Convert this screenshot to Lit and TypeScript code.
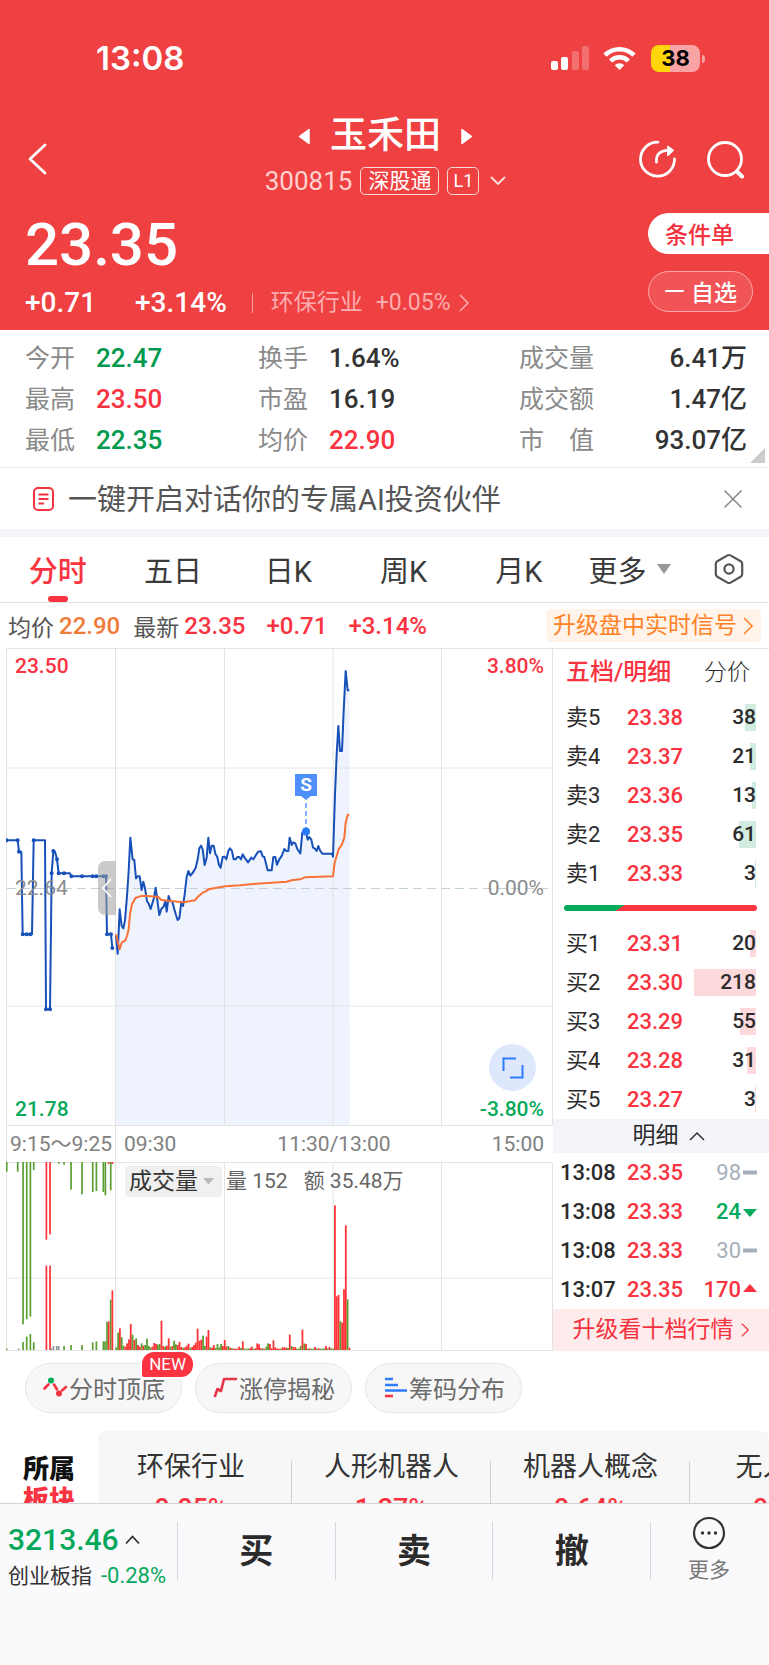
import { LitElement, html, css, svg } from "lit";
import { customElement } from "lit/decorators.js";

type Point = [number, number];

// Price series in plot units: three units per pixel, y measured from 640px.
const AUCTION: Point[] = [
  [20, 598], [53, 598], [57, 632], [64, 632], [68, 880], [80, 880], [91, 880], [96, 880], [101, 598],
  [135, 598], [138, 1105], [150, 1105], [155, 697], [160, 630], [165, 632], [171, 655], [176, 697],
  [192, 697], [210, 697], [214, 706], [246, 706], [278, 706], [289, 706], [310, 706], [318, 706],
  [321, 880], [333, 880], [337, 921],
];
const AUCTION_DOTS: Point[] = AUCTION.filter(([x]) => ![64, 96, 135, 165, 210].includes(x));

const PRICE: Point[] = [
  [348, 885], [353, 938], [359, 805], [365, 855], [370, 862], [375, 838], [381, 765], [386, 690],
  [391, 590], [398, 655], [403, 657], [408, 712], [413, 706], [419, 706], [425, 747], [430, 722],
  [435, 742], [441, 780], [446, 788], [452, 804], [462, 770], [467, 740], [473, 785], [478, 822],
  [484, 804], [491, 796], [496, 780], [500, 812], [506, 765], [511, 780], [517, 782], [523, 805],
  [528, 822], [533, 837], [538, 832], [544, 782], [549, 795], [554, 760], [560, 708], [565, 690],
  [571, 704], [580, 693], [587, 680], [593, 655], [598, 622], [603, 614], [608, 625], [614, 672],
  [620, 650], [625, 590], [630, 637], [635, 614], [641, 614], [646, 638], [652, 648], [657, 672],
  [662, 680], [668, 648], [674, 647], [679, 655], [685, 630], [690, 622], [696, 630], [701, 655],
  [707, 655], [712, 648], [718, 648], [723, 655], [728, 640], [734, 650], [744, 664], [754, 650],
  [760, 655], [768, 642], [774, 632], [783, 631], [788, 646], [793, 648], [803, 688], [815, 688],
  [820, 648], [826, 648], [831, 671], [838, 655], [846, 643], [853, 624], [859, 630], [865, 630],
  [869, 590], [875, 612], [880, 604], [886, 607], [892, 624], [901, 637], [907, 575], [912, 572],
  [918, 572], [923, 596], [928, 588], [934, 596], [939, 620], [944, 622], [950, 630], [955, 615],
  [961, 630], [967, 638], [996, 638], [999, 647], [1005, 460], [1010, 340], [1015, 255], [1020, 330],
  [1026, 330], [1031, 210], [1037, 90], [1043, 148], [1048, 148],
];

const AVERAGE: Point[] = [
  [348, 880], [354, 905], [359, 925], [365, 905], [376, 898], [381, 885], [386, 865], [390, 820],
  [396, 790], [406, 771], [420, 766], [435, 764], [475, 768], [484, 777], [505, 779], [550, 784],
  [585, 778], [592, 769], [608, 755], [617, 751], [626, 745], [650, 740], [675, 736], [720, 733],
  [770, 728], [860, 722], [875, 718], [900, 715], [915, 709], [999, 706], [1004, 665], [1010, 645],
  [1016, 625], [1026, 610], [1033, 590], [1037, 545], [1043, 522], [1048, 520],
];

// Auction volume: colour, x, start and end of the bar (units from 960px).
const AUCTION_BARS: [string, number, number, number][] = [
  ["g", 20, 603, 632], ["g", 53, 603, 632], ["g", 69, 603, 1090], ["g", 80, 603, 1075],
  ["g", 91, 603, 1067], ["g", 101, 603, 627], ["r", 139, 603, 836], ["r", 150, 603, 820],
  ["g", 177, 603, 608], ["g", 192, 603, 611], ["g", 213, 603, 686], ["g", 246, 603, 700],
  ["g", 278, 603, 693], ["g", 289, 603, 690], ["g", 310, 603, 693], ["g", 316, 603, 703],
  ["r", 326, 603, 609], ["g", 332, 603, 688], ["r", 337, 603, 609],
  ["g", 20, 1163, 1167], ["n", 56, 1163, 1167], ["g", 69, 1143, 1167], ["g", 80, 1127, 1167],
  ["g", 91, 1119, 1167], ["g", 101, 1144, 1167], ["r", 139, 914, 1167], ["r", 150, 914, 1167],
  ["n", 154, 1162, 1167], ["n", 160, 1155, 1167], ["n", 170, 1155, 1167], ["n", 176, 1155, 1167],
  ["g", 192, 1155, 1167], ["g", 213, 1152, 1167], ["g", 246, 1152, 1167], ["g", 278, 1144, 1167],
  ["g", 289, 1141, 1167], ["g", 310, 1141, 1167], ["g", 315, 1141, 1167], ["g", 321, 1083, 1167],
  ["r", 326, 1081, 1167], ["g", 332, 1016, 1167], ["r", 337, 988, 1167],
];

// One bar per minute.
const MINUTE_BARS =
  "g8 g52 r65 g38 g13 r10 r20 r32 r78 g46 r30 g35 r15 r10 g20 r13 g15 g34 g12 g8 r10 r21 r18 g16 g18 r88 r12 g10 r13 r35 " +
  "g10 r12 g28 g17 r15 r24 r9 g7 r8 r13 r19 g7 r9 r15 r22 r64 r28 r31 g43 g12 r40 r60 g8 r7 r15 g6 g18 g8 g18 r12 " +
  "r30 r10 g12 r7 g5 r4 r4 r4 r10 g6 r26 g4 g4 g4 r5 r10 g4 r5 r20 r17 r5 g5 r4 g10 g20 r18 r5 r29 r8 r4 " +
  "r4 g4 r8 r8 r7 g6 r46 g12 r9 r9 g4 g4 g12 r61 g20 r18 g4 r5 g4 g4 r9 g4 r5 g4 g4 g4 r12 g5 r9 g5 " +
  "g4 r434 r161 r165 g87 r82 r182 r374 g152 r7";

const BAR_COLORS: Record<string, string> = { g: "#5a9e32", r: "#ff3236", n: "#8d9296" };

const points = (list: Point[]) => list.map(([x, y]) => `${x / 3},${640 + y / 3}`).join(" ");

const chevronRight = html`<svg class="chev" viewBox="0 0 12 20" width="12" height="20" aria-hidden="true">
  <path d="M2 2l8 8-8 8" fill="none" stroke="currentColor" stroke-width="1.6" />
</svg>`;

const STATS: [string, string, string][] = [
  ["今开", "22.47", "down"], ["换手", "1.64%", ""], ["成交量", "6.41万", ""],
  ["最高", "23.50", "up"], ["市盈", "16.19", ""], ["成交额", "1.47亿", ""],
  ["最低", "22.35", "down"], ["均价", "22.90", "up"], ["市　值", "93.07亿", ""],
];

@customElement("stock-header")
export class StockHeader extends LitElement {
  static styles = css`
    :host { display: block; background: #ef4042; color: #fff; }
    button { font: inherit; color: inherit; background: none; border: 0; padding: 0; display: flex; }
    svg { display: block; }
    .status { display: flex; justify-content: space-between; padding: 38px 65px 34px 96px; line-height: 40px; }
    .clock { font: 600 33px/40px Inter, sans-serif; }
    .signals { display: flex; align-items: center; }
    .battery { position: relative; width: 49px; height: 27px; margin-left: 15px; margin-right: 4px; border-radius: 8px;
      background: linear-gradient(90deg, #ffd60a 38%, #f9a3a4 38%); color: #000;
      font: 700 22px/27px Inter, sans-serif; text-align: center; }
    .battery::after { content: ""; position: absolute; right: -5px; top: 10px; width: 3px; height: 8px;
      border-radius: 0 4px 4px 0; background: #f7a0a0; }
    .nav { display: grid; grid-template-columns: 1fr auto 1fr; padding: 0 24px 0 26px; }
    .back { margin-top: 30px; align-self: start; }
    .tools { display: flex; justify-content: flex-end; gap: 28px; margin-top: 27px; }
    .tools button { align-self: flex-start; }
    .title { display: flex; align-items: center; justify-content: center; gap: 20px; padding-top: 1px; }
    h1 { margin: 0; font-size: 37px; line-height: 46px; font-weight: 500; }
    .sub { display: flex; align-items: center; justify-content: center; gap: 8px; margin-top: 8px; }
    .code { font-size: 26px; line-height: 28px; color: #ffd2d0; }
    .tag { border: 1px solid #ffd9d8; border-radius: 5px; font-size: 21px; line-height: 26px; padding: 0 7px; }
    .tag.lv { padding: 0 5px; font-size: 18px; }
    .drop { margin-left: 3px; }
    .quote { display: flex; justify-content: space-between; padding: 18px 0 9px 25px; }
    .price { font-size: 60px; line-height: 64px; font-weight: 500; }
    .change { display: flex; align-items: center; margin-top: 8px; font-size: 28px; line-height: 36px; font-weight: 500; }
    .pct { margin-left: 39px; }
    .sector { display: flex; align-items: center; gap: 13px; margin-left: 25px; padding-left: 18px;
      color: #fbadad; font-size: 23px; line-height: 20px; font-weight: 400; text-decoration: none;
      border-left: 1px solid #f79a9b; }
    .chev { margin-left: -6px; }
    .actions { display: flex; flex-direction: column; gap: 17px; width: 121px; }
    .actions button { height: 41px; align-items: center; font-size: 23px; font-weight: 500; box-sizing: border-box; padding-bottom: 2px; }
    .order { background: #fff; border-radius: 21px 0 0 21px; padding-left: 17px; color: #f5333f; }
    .actions .fav { width: 105px; border: 1px solid #f9a9a9; border-radius: 21px; background: #f15456; padding-left: 16px; gap: 7px; }
  `;
  render() {
    return html`
      <div class="status">
        <span class="clock">13:08</span>
        <div class="signals">
          <svg width="86" height="28" viewBox="0 0 86 28" fill="#fff" aria-label="信号">
            <rect x="1" y="17" width="7" height="9" rx="2" />
            <rect x="11" y="13" width="7" height="13" rx="2" />
            <rect x="22" y="7" width="7" height="19" rx="2" opacity=".25" />
            <rect x="32" y="2" width="7" height="24" rx="2" opacity=".25" />
            <g fill="none" stroke="#fff" stroke-width="4.6">
              <path d="M55 11.2a20.500 20.500 0 0 1 29 0" />
              <path d="M60.600 17a12.500 12.500 0 0 1 17.800 0" />
            </g>
            <path d="M69.500 26l-4.800-4.700a6.800 6.800 0 0 1 9.600 0z" />
          </svg>
          <span class="battery">38</span>
        </div>
      </div>
      <div class="nav">
        <button class="back" aria-label="返回">
          <svg width="22" height="34" viewBox="0 0 22 34"><path d="M19 3L4 17l15 14" fill="none" stroke="#fff" stroke-width="2.800" stroke-linecap="round" stroke-linejoin="round" /></svg>
        </button>
        <div>
          <div class="title">
            <button aria-label="上一只"><svg width="12" height="17" viewBox="0 0 12 17"><path d="M11 1.500v14L1.500 8.500z" fill="#fff" stroke="#fff" stroke-width="1.500" stroke-linejoin="round" /></svg></button>
            <h1>玉禾田</h1>
            <button aria-label="下一只"><svg width="12" height="17" viewBox="0 0 12 17"><path d="M1 1.500v14l9.500-7z" fill="#fff" stroke="#fff" stroke-width="1.500" stroke-linejoin="round" /></svg></button>
          </div>
          <div class="sub">
            <span class="code">300815</span><span class="tag">深股通</span><span class="tag lv">L1</span>
            <button class="drop" aria-label="展开"><svg width="16" height="10" viewBox="0 0 16 10"><path d="M1 1l7 7 7-7" fill="none" stroke="#ffe3e2" stroke-width="1.800" /></svg></button>
          </div>
        </div>
        <div class="tools">
          <button aria-label="分享">
            <svg width="39" height="40" viewBox="0 0 39 40" fill="none" stroke="#fff" stroke-width="2.800" stroke-linecap="round">
              <path d="M20 3.200A17 17 0 1 0 36.500 20" />
              <path d="M18.500 23.200C18 15.500 21 11.500 32.500 11.200" />
              <path d="M30 7.800l4.800 3.500-4.800 4.700z" fill="#fff" stroke-width="2" stroke-linejoin="round" />
            </svg>
          </button>
          <button aria-label="搜索">
            <svg width="40" height="40" viewBox="0 0 40 40" fill="none" stroke="#fff" stroke-width="2.800" stroke-linecap="round">
              <circle cx="20" cy="20" r="16.500" /><path d="M32.500 33l4.500 4.500" stroke-width="4" />
            </svg>
          </button>
        </div>
      </div>
      <div class="quote">
        <div>
          <div class="price">23.35</div>
          <div class="change">
            <span>+0.71</span><span class="pct">+3.14%</span>
            <a class="sector" href="#sector"><span>环保行业</span><span>+0.05%</span>${chevronRight}</a>
          </div>
        </div>
        <div class="actions">
          <button class="order">条件单</button>
          <button class="fav"><svg width="19" height="4" viewBox="0 0 19 4"><path d="M1 2h17" stroke="#fff" stroke-width="2" stroke-linecap="round" /></svg>自选</button>
        </div>
      </div>
    `;
  }
}

@customElement("intraday-chart")
export class IntradayChart extends LitElement {
  static styles = css`
    :host { display: block; margin-left: 6px; font-size: 21px; line-height: 24px; }
    svg { display: block; }
    .plot, .volume { position: relative; }
    .plot > svg, .volume > svg { width: 100%; }
    .plot > svg { height: 478px; }
    .volume > svg { height: 189px; }
    line, polyline, path { vector-effect: non-scaling-stroke; }
    .label { position: absolute; }
    .left { left: 9px; }
    .right { right: 9px; }
    .top { top: 6px; }
    .mid { top: 228px; }
    .low { top: 449px; }
    .up { color: #fa3341; font-weight: 500; }
    .down { color: #07a95a; font-weight: 500; }
    .flat { color: #8c8c8c; }
    button { font: inherit; color: inherit; border: 0; padding: 0; cursor: pointer; }
    .handle { position: absolute; left: 92px; top: 213px; width: 18px; height: 54px; display: flex; align-items: center; justify-content: center;
      border-radius: 7px 0 0 7px; background: rgba(160, 160, 160, .55); }
    .expand { position: absolute; right: 17px; top: 396px; width: 47px; height: 47px; border-radius: 50%; background: #dee8fd;
      display: flex; align-items: center; justify-content: center; }
    .signal { position: absolute; left: 289px; top: 126px; width: 22px; height: 22px; background: #4f8ffb; color: #fff;
      font-weight: 700; font-size: 19px; line-height: 22px; text-align: center; }
    .signal::after { content: ""; position: absolute; left: 6px; top: 22px; border: 5px solid transparent; border-top: 4px solid #4f8ffb; border-bottom: 0; }
    .axis { display: flex; align-items: center; box-sizing: border-box; height: 36px; color: #808080; border-left: 1px solid #e4e4e4; padding-right: 9px; }
    .axis span:nth-child(1) { width: 108px; border-right: 1px solid #e4e4e4; line-height: 36px; white-space: nowrap; text-indent: 3px; }
    .axis span:nth-child(2) { padding-left: 8px; }
    .axis span:nth-child(3) { margin: 0 auto; }
    .legend { position: absolute; left: 119px; top: 4px; display: flex; align-items: center; color: #666; line-height: 31px; white-space: nowrap; }
    .kind { display: flex; align-items: center; gap: 5px; background: #f0f0f0; border-radius: 4px; padding: 0 8px 0 4px;
      margin-right: 4px; font-size: 23px; color: #333; line-height: 31px; }
    .amount { margin-left: 16px; }
  `;
  render() {
    const line = points(PRICE);
    return html`
      <div class="plot">
        <svg viewBox="6 647 547 478" preserveAspectRatio="none" role="img" aria-label="分时走势">
          <polygon points="115.6,1124 ${line} 350,1124" fill="#eef3fe" />
          <path d="M6 647.5H553M6 1124.500H553M6 767H553M6 1005H553M6.500 647V1125M115.500 647V1125M224.500 647V1125M333 647V1125M441.500 647V1125M552.500 647V1125" fill="none" stroke="#e4e4e4" />
          <path d="M7 887.500H553" fill="none" stroke="#c4d0d8" stroke-dasharray="9 5" />
          <g fill="none" stroke-width="2" stroke-linejoin="round">
            <polyline points=${points(AUCTION)} stroke="#1650b8" />
            <path d=${AUCTION_DOTS.map(([x, y]) => `M${x / 3} ${640 + y / 3}h.01`).join("")} stroke="#1650b8" stroke-width="4" stroke-linecap="round" />
            <polyline points=${line} stroke="#1650b8" />
            <polyline points=${points(AVERAGE)} stroke="#fa7237" />
            <path d="M306 802V828" stroke="#7fb0fb" stroke-dasharray="5 3" />
            <path d="M306 830.600h.01" stroke="#2a7bfb" stroke-width="8" stroke-linecap="round" />
          </g>
        </svg>
        <span class="label left top up">23.50</span>
        <span class="label right top up">3.80%</span>
        <span class="label left mid flat">22.64</span>
        <span class="label right mid flat">0.00%</span>
        <span class="label left low down">21.78</span>
        <span class="label right low down">-3.80%</span>
        <span class="signal">S</span>
        <button class="handle" aria-label="收起集合竞价">
          <svg width="12" height="20" viewBox="0 0 12 20"><path d="M10 1L2 10l8 9" fill="none" stroke="#fff" stroke-width="1.800" /></svg>
        </button>
        <button class="expand" aria-label="全屏">
          <svg width="22" height="22" viewBox="0 0 22 22" fill="none" stroke="#2e7cfb" stroke-width="2"><path d="M1.500 14V1.500H14M20.500 8v12.500H8" /></svg>
        </button>
      </div>
      <div class="axis"><span>9:15～9:25</span><span>09:30</span><span>11:30/13:00</span><span>15:00</span></div>
      <div class="volume">
        <svg viewBox="6 1161 547 189" preserveAspectRatio="none" role="img" aria-label="成交量">
          <path d="M6 1161.500H553M6 1277H553M6 1349.500H553M6.500 1161V1350M115.500 1161V1350M224.500 1161V1350M333 1161V1350M441.500 1161V1350M552.500 1161V1350" fill="none" stroke="#e4e4e4" />
          ${AUCTION_BARS.map(([c, x, a, b]) => svg`<rect x=${x / 3 - 0.8} y=${960 + a / 3} width="1.700" height=${(b - a) / 3} fill=${BAR_COLORS[c]} />`)}
          ${MINUTE_BARS.split(" ").map((bar, i) => {
            const h = Number(bar.slice(1)) / 3;
            return svg`<rect x=${115.4 + i * 1.807} y=${1349 - h} width="1.800" height=${h} fill=${BAR_COLORS[bar[0]]} />`;
          })}
        </svg>
        <div class="legend">
          <button class="kind">成交量<svg width="11" height="7" viewBox="0 0 11 7"><path d="M0 0h11L5.500 6.500z" fill="#b8b8b8" /></svg></button>
          <span>量 152</span><span class="amount">额 35.48万</span>
        </div>
      </div>
    `;
  }
}

const ASKS: [string, string, number][] = [["卖5", "23.38", 38], ["卖4", "23.37", 21], ["卖3", "23.36", 13], ["卖2", "23.35", 61], ["卖1", "23.33", 3]];
const BIDS: [string, string, number][] = [["买1", "23.31", 20], ["买2", "23.30", 218], ["买3", "23.29", 55], ["买4", "23.28", 31], ["买5", "23.27", 3]];
const TICKS: [string, string, number, string][] = [["13:08", "23.35", 98, "flat"], ["13:08", "23.33", 24, "down"], ["13:08", "23.33", 30, "flat"], ["13:07", "23.35", 170, "up"]];
const MARKS: Record<string, string> = { flat: "M0 4.500h14v4H0z", down: "M0 4h14L7 12z", up: "M0 9h14L7 1z" };

@customElement("order-book")
export class OrderBook extends LitElement {
  static styles = css`
    :host { display: block; font-size: 22px; color: #2b2b2b; border-top: 1px solid #e4e4e4; }
    button { font: inherit; color: inherit; background: none; border: 0; padding: 0; }
    .heads { display: flex; justify-content: space-between; padding: 0 19px 2px 13px; font-size: 23px; line-height: 47px; }
    .heads .on { color: #fa3341; font-weight: 500; font-size: 24px; }
    .heads .off { font-weight: 300; }
    table { width: 100%; border-collapse: collapse; table-layout: fixed; }
    td, th { padding: 0; height: 39px; line-height: 39px; text-align: left; font-weight: 400; }
    th { width: 74px; text-indent: 13px; }
    .ticks th { text-indent: 7px; font-weight: 500; }
    .px { width: 66px; font-size: 22px; font-weight: 500; color: #fa3341; }
    .qty { text-align: right; padding-right: 13px; font-size: 21px; }
    .depth { display: block; height: 27px; line-height: 27px; font-weight: 500; white-space: nowrap;
      background: linear-gradient(var(--tint), var(--tint)) right / var(--w) 100% no-repeat; }
    .asks { --tint: #d2ecdf; }
    .bids { --tint: #fdd9db; }
    .ratio { height: 6px; margin: 12px 12px 13px 11px; border-radius: 3px; background: linear-gradient(146deg, #05ab5c 30%, #fa3641 30%); }
    .toggle { display: flex; align-items: center; justify-content: center; gap: 10px; width: 100%; box-sizing: border-box; padding-left: 15px; background: #f3f5fa; font-size: 23px; line-height: 34px; }
    .tick { display: flex; align-items: center; justify-content: flex-end; gap: 2px; font-size: 22px; font-weight: 500; margin-right: -1px; }
    .flat { color: #a5afb9; font-weight: 400; }
    .down { color: #05ab5c; }
    .up { color: #fa3341; }
    .more { display: flex; align-items: center; justify-content: center; gap: 6px; background: #feeced; color: #f5333f; text-decoration: none;
      font-size: 23px; line-height: 42px; white-space: nowrap; }
    .chev { width: 10px; height: 16px; }
  `;
  private book(rows: [string, string, number][], side: string) {
    return html`<table class=${side}>
      ${rows.map(([name, px, qty]) => html`<tr>
        <th scope="row">${name}</th><td class="px">${px}</td>
        <td class="qty"><span class="depth" style="--w:${Math.max(1, Math.round((qty * 62) / 218))}px">${qty}</span></td>
      </tr>`)}
    </table>`;
  }
  render() {
    return html`
      <div class="heads"><button class="on">五档/明细</button><button class="off">分价</button></div>
      ${this.book(ASKS, "asks")}
      <div class="ratio"></div>
      ${this.book(BIDS, "bids")}
      <button class="toggle">明细<svg width="16" height="10" viewBox="0 0 16 10"><path d="M1 9l7-7 7 7" fill="none" stroke="#333" stroke-width="1.500" /></svg></button>
      <table class="ticks">
        ${TICKS.map(([time, px, qty, dir]) => html`<tr>
          <th scope="row">${time}</th><td class="px">${px}</td>
          <td class="qty"><span class="tick ${dir}">${qty}<svg width="14" height="13" viewBox="0 0 14 13"><path d=${MARKS[dir]} fill="currentColor" /></svg></span></td>
        </tr>`)}
      </table>
      <a class="more" href="#level2">升级看十档行情${chevronRight}</a>
    `;
  }
}

@customElement("app-root")
export class AppRoot extends LitElement {
  static styles = css`
    :host { display: flex; flex-direction: column; height: 100vh; background: #fff; color: #333;
      font-family: Roboto, "Noto Sans CJK SC", sans-serif; }
    button { font: inherit; color: inherit; background: none; border: 0; padding: 0; }
    svg { display: block; flex: none; }
    main { flex: 1; min-height: 0; overflow: hidden; }
    .up { color: #fa3341; }
    .down { color: #00994d; }
    .stats { position: relative; display: grid; grid-template-columns: 233fr 261fr 228fr; margin: 0; padding: 8px 22px 6px 25px; border-bottom: 1px solid #ebebeb; }
    .stats div { display: flex; line-height: 41px; font-size: 25px; }
    .stats dt { color: #8a8a8a; }
    .stats dd { margin: 0 0 0 21px; font-size: 26px; font-weight: 500; }
    .stats div:nth-child(3n) dd { margin-left: auto; }
    .stats::after { content: ""; position: absolute; right: 4px; bottom: 4px; border-left: 15px solid transparent; border-bottom: 15px solid #ccc; }
    .banner { display: flex; align-items: center; padding: 0 26px 0 32px; height: 61px; font-size: 29px; color: #555; border-bottom: 8px solid #f3f5fa; }
    .banner p { margin: 0 auto 0 13px; line-height: 40px; padding-top: 3px; }
    .tabs { display: grid; grid-template-columns: repeat(5, 15.5%) 1fr auto; align-items: center; height: 65px; padding-right: 25px; border-bottom: 1px solid #e2e2e2; font-size: 29px; }
    .tabs button { display: flex; align-items: center; justify-content: center; height: 65px; color: #3a3a3a; padding-bottom: 2px; box-sizing: border-box; }
    .tabs .more { justify-content: flex-start; gap: 10px; padding-left: 12px; }
    .tabs .on { position: relative; color: #fa3341; font-weight: 500; }
    .on::after { content: ""; position: absolute; left: 50%; bottom: 0; width: 20px; height: 6px; margin-left: -10px; border-radius: 3px; background: #fa3341; }
    .info { display: flex; align-items: center; height: 45px; padding: 0 8px; font-size: 23px; color: #555; }
    .info b { font-weight: 500; font-size: 24px; margin-left: 5px; }
    .info .avg { color: #f07c3c; margin-right: 13px; }
    .info .gap { margin-left: 21px; }
    .info a { display: flex; align-items: center; gap: 5px; margin-left: auto; background: #fff3ea; border-radius: 5px; padding: 0 7px; color: #ff8125;
      line-height: 33px; text-decoration: none; }
    .board { display: grid; grid-template-columns: 1fr 216px; }
    .chips { display: flex; gap: 13px; padding: 12px 25px 18px; }
    .chips button { position: relative; display: flex; align-items: center; height: 50px; border: 1px solid #e6e6e6; border-radius: 25px; background: #f7f7f7;
      padding: 0 16px 2px; font-size: 24px; color: #6b6b6b; box-sizing: border-box; white-space: nowrap; }
    .new { position: absolute; right: -12px; top: -12px; background: #fa3341; color: #fff; font-size: 17px; line-height: 25px; padding: 0 7px;
      border-radius: 12px 12px 12px 2px; box-shadow: 0 0 0 2px #fff; }
    .plates { display: flex; }
    .plates h2 { margin: 23px 0 0; padding-left: 23px; width: 75px; font-size: 26px; line-height: 31px; font-weight: 900; color: #111; }
    .list { display: flex; flex: 1; min-width: 0; overflow: hidden; background: #f7f7f7; border-radius: 8px; padding: 15px 0 20px; }
    .list a { position: relative; box-sizing: border-box; flex: none; width: 199px; text-align: center; font-size: 27px; line-height: 43px; color: #333; text-decoration: none; }
    .list a:first-child { width: 194px; padding-right: 8px; }
    .list a::after { content: ""; position: absolute; right: 0; top: 15px; bottom: 0; width: 1px; background: #d0d0d0; }
    .list b { display: block; font-weight: 500; line-height: 41px; }
    footer { display: grid; grid-template-columns: 23% repeat(3, 1fr) 119px; box-sizing: border-box; height: 162px; border-top: 1px solid #d4d4d8; background: #fafafc; }
    .index { padding: 16px 0 0 8px; color: #05a85a; white-space: nowrap; }
    .index strong { display: flex; align-items: center; gap: 6px; font-size: 30px; line-height: 40px; font-weight: 500; }
    .index span { display: block; font-size: 22px; line-height: 32px; }
    .index i { font-style: normal; font-size: 21px; color: #333; margin-right: 9px; }
    .trade, .etc { height: 58px; margin-top: 18px; border-left: 1px solid #d8d8dc; }
    .trade { font-size: 34px; line-height: 58px; font-weight: 700; color: #2b2b2b; }
    .etc { display: flex; flex-direction: column; align-items: center; font-size: 21px; line-height: 28px; color: #777; padding-right: 2px; }
    .etc svg { margin: -6px 0 6px; }
  `;
  render() {
    return html`
      <main>
        <stock-header></stock-header>
        <dl class="stats">
          ${STATS.map(([k, v, c]) => html`<div><dt>${k}</dt><dd class=${c}>${v}</dd></div>`)}
        </dl>
        <div class="banner">
          <svg width="23" height="26" viewBox="0 0 23 26" fill="none" stroke="#f5333f" stroke-width="2"><rect x="2" y="2" width="19" height="22" rx="4" /><path d="M6.500 8.500h10M6.500 13h10M6.500 17.500h5.500" /></svg>
          <p>一键开启对话你的专属AI投资伙伴</p>
          <button aria-label="关闭"><svg width="20" height="20" viewBox="0 0 20 20"><path d="M1.500 1.500l17 17M18.500 1.500l-17 17" stroke="#8a8a8a" stroke-width="1.600" /></svg></button>
        </div>
        <nav class="tabs">
          <button class="on">分时</button><button>五日</button><button>日K</button><button>周K</button><button>月K</button>
          <button class="more">更多<svg width="14" height="10" viewBox="0 0 14 10"><path d="M0 0h14L7 10z" fill="#999" /></svg></button>
          <button aria-label="设置"><svg width="30" height="32" viewBox="0 0 30 32" fill="none" stroke="#555" stroke-width="2.200" stroke-linejoin="round"><path d="M13.500 2.400L3.300 8.200Q1.800 9.200 1.800 11v10q0 1.800 1.500 2.800l10.200 5.800q1.500.8 3 0l10.200-5.800q1.500-1 1.500-2.800V11q0-1.800-1.500-2.800L16.500 2.400q-1.500-.8-3 0z" /><circle cx="15" cy="16" r="4.600" /></svg></button>
        </nav>
        <div class="info">
          <span>均价</span><b class="avg">22.90</b><span>最新</span><b class="up">23.35</b><b class="up gap">+0.71</b><b class="up gap">+3.14%</b>
          <a href="#signal">升级盘中实时信号${chevronRight}</a>
        </div>
        <section class="board"><intraday-chart></intraday-chart><order-book></order-book></section>
        <div class="chips">
          <button>
            <svg width="27" height="22" viewBox="0 0 27 22" fill="none" stroke="#f5333f" stroke-width="2.600" stroke-linecap="round"><path d="M2.500 12.500l4-4M12 8.500l3 5M20 14.500l4-3.500" /><circle cx="9" cy="4.500" r="3" fill="#05ab5c" stroke="none" /><circle cx="17" cy="17.500" r="3" fill="#f5333f" stroke="none" /></svg>
            分时顶底<span class="new">NEW</span>
          </button>
          <button>
            <svg width="27" height="22" viewBox="0 0 27 22" fill="none" stroke="#e5354a" stroke-width="2.600" stroke-linecap="round" stroke-linejoin="round"><path d="M3 20l2.500-7 3.500 2 3-12h12" /></svg>
            涨停揭秘
          </button>
          <button>
            <svg width="27" height="22" viewBox="0 0 27 22" stroke="#2e7cfb" stroke-width="2.600"><path d="M3 3h8M3 9h13M3 14.500h22" /><path d="M3 20h8" stroke="#f5333f" /></svg>
            筹码分布
          </button>
        </div>
        <section class="plates">
          <h2>所属<br /><span class="up">板块</span></h2>
          <div class="list">
            <a href="#p1">环保行业<b class="up">0.05%</b></a>
            <a href="#p2">人形机器人<b class="up">1.37%</b></a>
            <a href="#p3">机器人概念<b class="up">0.64%</b></a>
            <a href="#p4">无人驾驶<b class="up">0.52%</b></a>
          </div>
        </section>
      </main>
      <footer>
        <div class="index">
          <strong>3213.46<svg width="15" height="10" viewBox="0 0 15 10"><path d="M1 8.500l6.500-7 6.500 7" fill="none" stroke="#333" stroke-width="1.800" /></svg></strong>
          <span><i>创业板指</i>-0.28%</span>
        </div>
        <button class="trade">买</button><button class="trade">卖</button><button class="trade">撤</button>
        <button class="etc">
          <svg width="34" height="34" viewBox="0 0 34 34"><circle cx="17" cy="17" r="15" fill="none" stroke="#333" stroke-width="2.200" /><g fill="#333"><circle cx="10.500" cy="17" r="1.700" /><circle cx="17" cy="17" r="1.700" /><circle cx="23.500" cy="17" r="1.700" /></g></svg>
          更多
        </button>
      </footer>
    `;
  }
}
